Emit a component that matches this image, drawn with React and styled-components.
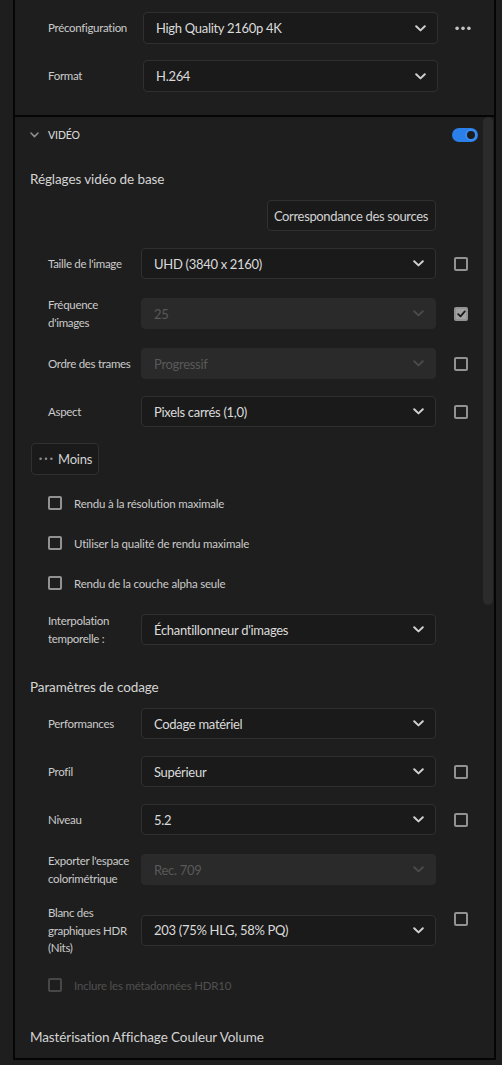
import React from "react";
import styled, { createGlobalStyle } from "styled-components";

const GlobalStyle = createGlobalStyle`
  html, body { margin: 0; padding: 0; background: #1e1e1e; }
  body { font-family: "Lato", "Noto Sans", sans-serif; -webkit-font-smoothing: antialiased; }
  * { box-sizing: border-box; }
`;

const Page = styled.div`
  width: 502px;
  height: 1065px;
  background: #1e1e1e;
  padding: 0 6px 0 13px;
  overflow: hidden;
`;

const Frame = styled.div`
  height: 1060px;
  border-left: 2px solid #050505;
  border-right: 2px solid #050505;
  border-bottom: 2px solid #050505;
  display: flex;
  flex-direction: column;
  background: #1e1e1e;
`;

const TopPanel = styled.div`
  height: 117px;
  flex: none;
  border-bottom: 2px solid #050505;
  padding: 12px 0 0 33px;
  display: flex;
  flex-direction: column;
  gap: 16px;
`;

const TopRow = styled.div`
  display: grid;
  grid-template-columns: 95px 295px 33px;
  align-items: center;
  & > :last-child { justify-self: end; }
`;

const VideoPanel = styled.div`
  flex: 1;
  display: flex;
  overflow: hidden;
  min-height: 0;
`;

const Content = styled.div`
  flex: 1;
  display: flex;
  flex-direction: column;
`;

const ScrollTrack = styled.div`
  width: 11px;
  padding-right: 1px;
  flex: none;
`;

const ScrollThumb = styled.div`
  width: 10px;
  height: 488px;
  background: #2b2b2b;
  border-radius: 5px;
`;

const PanelHeader = styled.div`
  height: 36px;
  display: flex;
  align-items: center;
  padding: 0 5px 0 15px;
  gap: 9px;
`;

const HeaderTitle = styled.span`
  flex: 1;
  font-size: 10.5px;
  color: #d6d6d6;
  letter-spacing: -0.1px;
  font-weight: 500;
`;

const Toggle = styled.div`
  width: 26px;
  height: 14px;
  border-radius: 7px;
  background: #2b7fe8;
  display: flex;
  align-items: center;
  justify-content: flex-end;
  padding-right: 1px;
`;

const Knob = styled.div`
  width: 12px;
  height: 12px;
  border-radius: 50%;
  background: #1c1c1c;
  border: 2px solid #3a8cf0;
`;

const SectionTitle = styled.div`
  margin-top: ${(p) => p.$top}px;
  padding-left: 15px;
  height: 20px;
  line-height: 20px;
  font-size: 13.5px;
  color: #d4d4d4;
  letter-spacing: -0.1px;
`;

const ButtonRow = styled.div`
  margin-top: 11px;
  padding-right: 47px;
  display: flex;
  justify-content: flex-end;
`;

const Button = styled.button`
  height: 31px;
  padding: 0 7px 0 6px;
  background: #1a1a1a;
  border: 1px solid #303030;
  border-radius: 4px;
  color: #d2d2d2;
  font-family: inherit;
  font-size: 13px;
  letter-spacing: -0.35px;
`;

const MoreButton = styled.button`
  margin: 16px 0 0 16px;
  width: 68px;
  height: 32px;
  background: #1a1a1a;
  border: 1px solid #303030;
  border-radius: 4px;
  color: #d2d2d2;
  font-family: inherit;
  font-size: 13px;
  letter-spacing: -0.2px;
  display: flex;
  align-items: center;
  gap: 5px;
  padding: 0 0 0 7px;
`;

const FieldList = styled.div`
  margin-top: ${(p) => p.$top}px;
  padding-left: 33px;
  display: flex;
  flex-direction: column;
  gap: 17px;
`;

const FieldRow = styled.div`
  display: grid;
  grid-template-columns: 93px 295px 32px;
  align-items: center;
  & > :last-child { justify-self: end; }
`;

const Label = styled.div`
  font-size: 11.5px;
  line-height: 17.5px;
  color: #cbcbcb;
  letter-spacing: -0.3px;
`;

const Select = styled.div`
  height: ${(p) => (p.$tall ? 32 : 31)}px;
  border-radius: 4px;
  background: ${(p) => (p.$disabled ? "#2a2a2a" : "#1a1a1a")};
  border: 1px solid ${(p) => (p.$disabled ? "#2a2a2a" : "#303030")};
  display: flex;
  align-items: center;
  justify-content: space-between;
  padding: 0 11px 0 12px;
  font-size: 13px;
  letter-spacing: -0.3px;
  color: ${(p) => (p.$disabled ? "#595959" : "#dadada")};
`;

const Box = styled.div`
  width: 14px;
  height: 14px;
  border-radius: 2px;
  border: 2px solid ${(p) => (p.$disabled ? "#474747" : "#929292")};
  background: ${(p) => (p.$checked ? "#a2a2a2" : "transparent")};
  display: flex;
  align-items: center;
  justify-content: center;
  flex: none;
  align-self: ${(p) => (p.$top ? "start" : "center")};
  margin-top: ${(p) => (p.$top ? "8px" : "0")};
`;

const CheckList = styled.div`
  margin-top: ${(p) => p.$top}px;
  padding-left: 33px;
  display: flex;
  flex-direction: column;
  gap: 20px;
`;

const CheckRow = styled.div`
  height: 20px;
  display: flex;
  align-items: center;
  gap: 12px;
`;

const CheckText = styled.span`
  font-size: 11.5px;
  letter-spacing: -0.2px;
  color: ${(p) => (p.$disabled ? "#505050" : "#cbcbcb")};
`;

const Chevron = ({ color = "#d0d0d0" }) => (
  <svg width="11" height="7" viewBox="0 0 11 7">
    <path d="M1.2 1.2 L5.5 5.4 L9.8 1.2" fill="none" stroke={color} strokeWidth="2" strokeLinecap="round" strokeLinejoin="round" />
  </svg>
);

const SmallChevron = () => (
  <svg width="9" height="6" viewBox="0 0 9 6">
    <path d="M1 1 L4.5 4.6 L8 1" fill="none" stroke="#8c8c8c" strokeWidth="1.6" strokeLinecap="round" strokeLinejoin="round" />
  </svg>
);

const Dots = ({ size = 16, r = 1.8, color = "#c0c0c0" }) => (
  <svg width={size} height={r * 2 + 1} viewBox={`0 0 ${size} ${r * 2 + 1}`}>
    {[0, 1, 2].map((i) => (
      <circle key={i} cx={r + 0.3 + i * ((size - 2 * r - 0.6) / 2)} cy={r + 0.5} r={r} fill={color} />
    ))}
  </svg>
);

const Check = ({ checked, disabled, top }) => (
  <Box $checked={checked} $disabled={disabled} $top={top}>
    {checked && (
      <svg width="9" height="8" viewBox="0 0 9 8">
        <path d="M1.2 4.2 L3.5 6.4 L7.8 1.4" fill="none" stroke="#1a1a1a" strokeWidth="1.8" strokeLinecap="round" strokeLinejoin="round" />
      </svg>
    )}
  </Box>
);

const Dropdown = ({ value, disabled, tall }) => (
  <Select $disabled={disabled} $tall={tall}>
    <span>{value}</span>
    <Chevron color={disabled ? "#4a4a4a" : "#d0d0d0"} />
  </Select>
);

const Field = ({ label, value, disabled, check, checked, checkTop }) => (
  <FieldRow>
    <Label>{label}</Label>
    <Dropdown value={value} disabled={disabled} />
    {check ? <Check checked={checked} top={checkTop} /> : <span />}
  </FieldRow>
);

export default function App() {
  return (
    <>
      <GlobalStyle />
      <Page>
        <Frame>
          <TopPanel>
            <TopRow>
              <Label>Préconfiguration</Label>
              <Dropdown value="High Quality 2160p 4K" tall />
              <Dots />
            </TopRow>
            <TopRow>
              <Label>Format</Label>
              <Dropdown value="H.264" tall />
              <span />
            </TopRow>
          </TopPanel>
          <VideoPanel>
            <Content>
              <PanelHeader>
                <SmallChevron />
                <HeaderTitle>VIDÉO</HeaderTitle>
                <Toggle>
                  <Knob />
                </Toggle>
              </PanelHeader>

              <SectionTitle $top={16}>Réglages vidéo de base</SectionTitle>
              <ButtonRow>
                <Button>Correspondance des sources</Button>
              </ButtonRow>

              <FieldList $top={17}>
                <Field label="Taille de l'image" value="UHD (3840 x 2160)" check />
                <Field label={<>Fréquence<br />d'images</>} value="25" disabled check checked />
                <Field label="Ordre des trames" value="Progressif" disabled check />
                <Field label="Aspect" value="Pixels carrés (1,0)" check />
              </FieldList>

              <div>
                <MoreButton>
                  <Dots size={14} r={1.3} color="#8a8a8a" />
                  Moins
                </MoreButton>
              </div>

              <CheckList $top={18}>
                <CheckRow>
                  <Check />
                  <CheckText>Rendu à la résolution maximale</CheckText>
                </CheckRow>
                <CheckRow>
                  <Check />
                  <CheckText>Utiliser la qualité de rendu maximale</CheckText>
                </CheckRow>
                <CheckRow>
                  <Check />
                  <CheckText>Rendu de la couche alpha seule</CheckText>
                </CheckRow>
              </CheckList>

              <FieldList $top={19}>
                <Field label={<>Interpolation<br />temporelle :</>} value="Échantillonneur d'images" />
              </FieldList>

              <SectionTitle $top={30}>Paramètres de codage</SectionTitle>
              <FieldList $top={11}>
                <Field label="Performances" value="Codage matériel" />
                <Field label="Profil" value="Supérieur" check />
                <Field label="Niveau" value="5.2" check />
                <Field label={<>Exporter l'espace<br />colorimétrique</>} value="Rec. 709" disabled />
                <Field label={<>Blanc des<br />graphiques HDR<br />(Nits)</>} value="203 (75% HLG, 58% PQ)" check checkTop />
              </FieldList>

              <CheckList $top={18.5}>
                <CheckRow>
                  <Check disabled />
                  <CheckText $disabled>Inclure les métadonnées HDR10</CheckText>
                </CheckRow>
              </CheckList>

              <SectionTitle $top={32}>Mastérisation Affichage Couleur Volume</SectionTitle>
            </Content>
            <ScrollTrack>
              <ScrollThumb />
            </ScrollTrack>
          </VideoPanel>
        </Frame>
      </Page>
    </>
  );
}
